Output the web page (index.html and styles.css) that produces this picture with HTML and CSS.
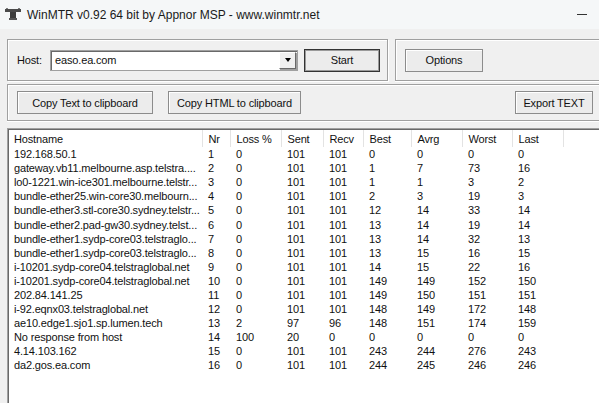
FILE: index.html
```html
<!DOCTYPE html>
<html lang="en">
<head>
  <meta charset="UTF-8">
  <title>WinMTR v0.92 64 bit by Appnor MSP - www.winmtr.net</title>
  <link rel="stylesheet" href="styles.css">
</head>
<body>
  <div class="titlebar">
    <svg class="app-icon" width="16" height="12" viewBox="0 0 16 12">
      <rect x="0" y="1" width="16" height="3" fill="#4a4a4a"/>
      <rect x="1" y="0" width="2" height="1" fill="#7a7a7a"/>
      <rect x="13" y="0" width="2" height="1" fill="#7a7a7a"/>
      <rect x="5" y="4" width="6" height="6" fill="#3c3c3c"/>
      <rect x="4" y="10" width="8" height="2" fill="#555"/>
    </svg>
    <span class="title">WinMTR v0.92 64 bit by Appnor MSP - www.winmtr.net</span>
    <span class="minimize"></span>
  </div>

  <div class="client">
    <div class="top-row">
      <div class="group host-group">
        <label class="host-label">Host:</label>
        <div class="combo">
          <span class="combo-text">easo.ea.com</span>
          <span class="combo-btn"><span class="arrow"></span></span>
        </div>
        <button class="btn btn-default start">Start</button>
      </div>
      <div class="group open-right options-group">
        <button class="btn options">Options</button>
      </div>
    </div>

    <div class="group open-right export-group">
      <button class="btn copy-text">Copy Text to clipboard</button>
      <button class="btn copy-html">Copy HTML to clipboard</button>
      <button class="btn export">Export TEXT</button>
    </div>

    <div class="list">
      <table class="hops">
        <colgroup>
          <col class="c-host"><col class="c-nr"><col class="c-loss"><col class="c-sent"><col class="c-recv">
          <col class="c-best"><col class="c-avrg"><col class="c-worst"><col class="c-last"><col>
        </colgroup>
        <thead>
          <tr><th>Hostname</th><th>Nr</th><th>Loss %</th><th>Sent</th><th>Recv</th><th>Best</th><th>Avrg</th><th>Worst</th><th>Last</th><th></th></tr>
        </thead>
        <tbody>
          <tr><td>192.168.50.1</td><td>1</td><td>0</td><td>101</td><td>101</td><td>0</td><td>0</td><td>0</td><td>0</td><td></td></tr>
          <tr><td>gateway.vb11.melbourne.asp.telstra....</td><td>2</td><td>0</td><td>101</td><td>101</td><td>1</td><td>7</td><td>73</td><td>16</td><td></td></tr>
          <tr><td>lo0-1221.win-ice301.melbourne.telstr...</td><td>3</td><td>0</td><td>101</td><td>101</td><td>1</td><td>1</td><td>3</td><td>2</td><td></td></tr>
          <tr><td>bundle-ether25.win-core30.melbourn...</td><td>4</td><td>0</td><td>101</td><td>101</td><td>2</td><td>3</td><td>19</td><td>3</td><td></td></tr>
          <tr><td>bundle-ether3.stl-core30.sydney.telstr...</td><td>5</td><td>0</td><td>101</td><td>101</td><td>12</td><td>14</td><td>33</td><td>14</td><td></td></tr>
          <tr><td>bundle-ether2.pad-gw30.sydney.telst...</td><td>6</td><td>0</td><td>101</td><td>101</td><td>13</td><td>14</td><td>19</td><td>14</td><td></td></tr>
          <tr><td>bundle-ether1.sydp-core03.telstraglo...</td><td>7</td><td>0</td><td>101</td><td>101</td><td>13</td><td>14</td><td>32</td><td>13</td><td></td></tr>
          <tr><td>bundle-ether1.sydp-core03.telstraglo...</td><td>8</td><td>0</td><td>101</td><td>101</td><td>13</td><td>15</td><td>16</td><td>15</td><td></td></tr>
          <tr><td>i-10201.sydp-core04.telstraglobal.net</td><td>9</td><td>0</td><td>101</td><td>101</td><td>14</td><td>15</td><td>22</td><td>16</td><td></td></tr>
          <tr><td>i-10201.sydp-core04.telstraglobal.net</td><td>10</td><td>0</td><td>101</td><td>101</td><td>149</td><td>149</td><td>152</td><td>150</td><td></td></tr>
          <tr><td>202.84.141.25</td><td>11</td><td>0</td><td>101</td><td>101</td><td>149</td><td>150</td><td>151</td><td>151</td><td></td></tr>
          <tr><td>i-92.eqnx03.telstraglobal.net</td><td>12</td><td>0</td><td>101</td><td>101</td><td>148</td><td>149</td><td>172</td><td>148</td><td></td></tr>
          <tr><td>ae10.edge1.sjo1.sp.lumen.tech</td><td>13</td><td>2</td><td>97</td><td>96</td><td>148</td><td>151</td><td>174</td><td>159</td><td></td></tr>
          <tr><td>No response from host</td><td>14</td><td>100</td><td>20</td><td>0</td><td>0</td><td>0</td><td>0</td><td>0</td><td></td></tr>
          <tr><td>4.14.103.162</td><td>15</td><td>0</td><td>101</td><td>101</td><td>243</td><td>244</td><td>276</td><td>243</td><td></td></tr>
          <tr><td>da2.gos.ea.com</td><td>16</td><td>0</td><td>101</td><td>101</td><td>244</td><td>245</td><td>246</td><td>246</td><td></td></tr>
        </tbody>
      </table>
    </div>
  </div>
</body>
</html>
```

FILE: styles.css
```css
body {
  margin: 0;
  width: 599px;
  height: 403px;
  overflow: hidden;
  background: #f0f0f0;
  font-family: "Liberation Sans", Arial, sans-serif;
  font-size: 11px;
  letter-spacing: -0.15px;
  color: #111;
}

/* title bar */
.titlebar {
  height: 29px;
  display: flex;
  align-items: center;
  padding-left: 5px;
  background: #f5f7f8;
  letter-spacing: 0;
}
.app-icon { margin-top: -1px; }
.title {
  margin-left: 6px;
  font-size: 12px;
  color: #1a1a1a;
}
.minimize {
  margin-left: auto;
  margin-right: 12px;
  width: 10px;
  height: 1px;
  background: #333;
}

/* client area - window is wider than the shot, right side is cut off */
.client {
  box-sizing: border-box;
  width: 599px;
  padding: 10px 0 0 7px;
}
.group {
  box-sizing: border-box;
  border: 1px solid #a0a0a0;
  box-shadow: inset 1px 1px 0 #fff, 1px 1px 0 #fff;
  display: flex;
  align-items: center;
}
.group.open-right {
  border-right: none;
  box-shadow: inset 1px 1px 0 #fff, 0 1px 0 #fff;
}
.top-row {
  display: flex;
  gap: 7px;
  height: 42px;
}
.host-group {
  width: 381px;
  padding-left: 9px;
}
.options-group {
  flex: 1;
  padding-left: 9px;
}
.host-label { width: 33px; }

.combo {
  box-sizing: border-box;
  width: 248px;
  height: 21px;
  display: flex;
  align-items: center;
  background: #fff;
  border: 1px solid #a0a0a0;
  box-shadow: inset 1px 1px 0 #696969;
}
.combo-text {
  flex: 1;
  padding-left: 4px;
}
.combo-btn {
  box-sizing: border-box;
  width: 17px;
  height: 17px;
  margin-right: 1px;
  display: flex;
  align-items: center;
  justify-content: center;
  background: #f0f0f0;
  border: 1px solid;
  border-color: #fff #696969 #696969 #fff;
  box-shadow: 1px 1px 0 #a0a0a0;
}
.arrow {
  width: 0;
  height: 0;
  border-left: 3.5px solid transparent;
  border-right: 3.5px solid transparent;
  border-top: 4px solid #000;
}

.btn {
  box-sizing: border-box;
  height: 23px;
  font-family: inherit;
  font-size: 11px;
  letter-spacing: -0.15px;
  color: #111;
  background: #ececec;
  border: 1px solid #8c8c8c;
  box-shadow: inset 1px 1px 0 #fff;
  padding: 0;
}
.btn-default {
  border-color: #333;
  box-shadow: inset 0 0 0 1px #9a9a9a;
}
.start {
  width: 76px;
  margin-left: 6px;
}
.options { width: 78px; }

.export-group {
  margin-top: 3px;
  height: 37px;
  padding-left: 9px;
}
.copy-text { width: 136px; }
.copy-html { width: 133px; margin-left: 15px; }
.export { width: 78px; margin-left: 214px; }

/* hop list */
.list {
  box-sizing: border-box;
  margin-top: 7px;
  height: 275px;
  background: #fff;
  border-top: 1px solid #a0a0a0;
  border-left: 1px solid #a0a0a0;
  box-shadow: inset 1px 1px 0 #696969;
  padding: 1px 0 0 1px;
  overflow: hidden;
}
.hops {
  table-layout: fixed;
  border-collapse: collapse;
  width: 100%;
}
.c-host { width: 193px; }
.c-nr { width: 28px; }
.c-loss { width: 51px; }
.c-sent { width: 42px; }
.c-recv { width: 40px; }
.c-best { width: 48px; }
.c-avrg { width: 51px; }
.c-worst { width: 50px; }
.c-last { width: 51px; }

.hops th {
  height: 17px;
  padding: 0 0 0 6px;
  font-weight: normal;
  text-align: left;
  border-right: 1px solid #e3e3e3;
  white-space: nowrap;
}
.hops th:last-child { border-right: none; }
.hops td {
  height: 14.1px;
  line-height: 14px;
  padding: 0 0 0 6px;
  white-space: nowrap;
  overflow: hidden;
}
.hops th:first-child,
.hops td:first-child { padding-left: 5px; }
```
